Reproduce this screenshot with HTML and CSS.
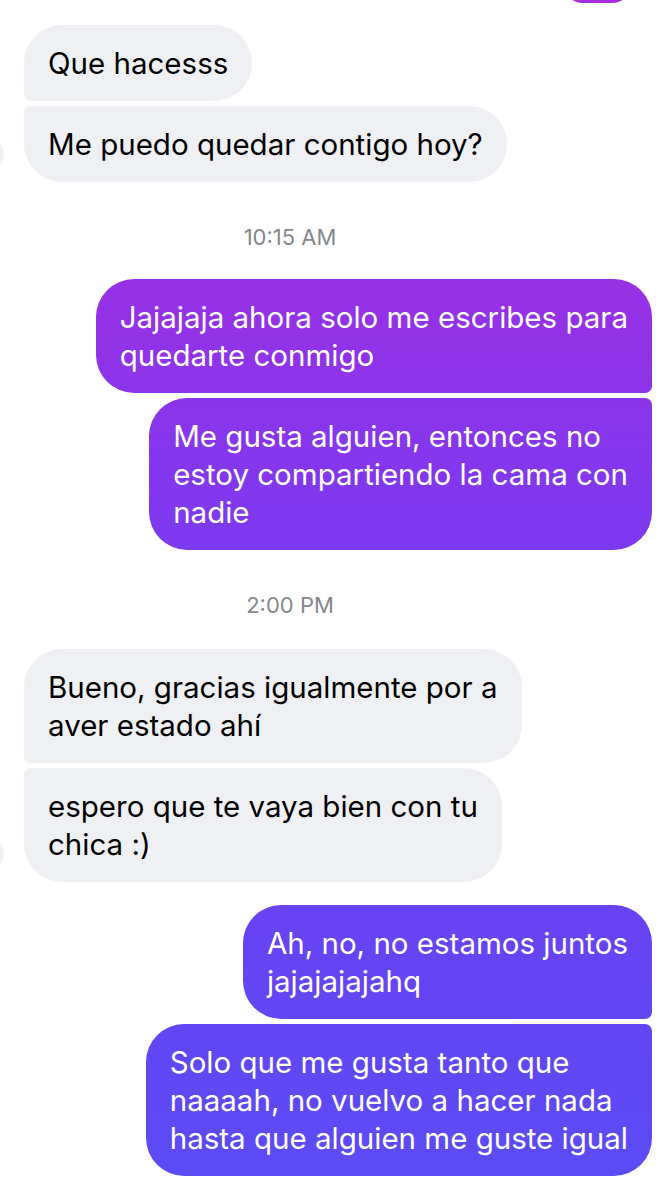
FILE: index.html
```html
<!DOCTYPE html>
<html lang="es">
<head>
    <meta charset="UTF-8">
    <meta name="viewport" content="width=device-width, initial-scale=1.0">
    <title>Chat</title>
    <link rel="stylesheet" href="styles.css">
</head>
<body>

    <div class="chat">
        <!-- burbuja cortada arriba -->
        <div class="group out cut">
            <div class="stack">
                <div class="bubble"></div>
            </div>
        </div>

        <div class="group in">
            <div class="avatar"></div>
            <div class="stack">
                <div class="bubble first">Que hacesss</div>
                <div class="bubble last">Me puedo quedar contigo hoy?</div>
            </div>
        </div>

        <div class="time">10:15 AM</div>

        <div class="group out">
            <div class="stack">
                <div class="bubble first">Jajajaja ahora solo me escribes para<br>quedarte conmigo</div>
                <div class="bubble last">Me gusta alguien, entonces no<br>estoy compartiendo la cama con<br>nadie</div>
            </div>
        </div>

        <div class="time second">2:00 PM</div>

        <div class="group in">
            <div class="avatar"></div>
            <div class="stack">
                <div class="bubble first">Bueno, gracias igualmente por a<br>aver estado ahí</div>
                <div class="bubble last">espero que te vaya bien con tu<br>chica :)</div>
            </div>
        </div>

        <div class="group out">
            <div class="stack">
                <div class="bubble first">Ah, no, no estamos juntos<br>jajajajajahq</div>
                <div class="bubble last">Solo que me gusta tanto que<br>naaaah, no vuelvo a hacer nada<br>hasta que alguien me guste igual</div>
            </div>
        </div>
    </div>

</body>
</html>
```

FILE: styles.css
```css
/* pantalla del chat */
body {
    margin: 0;
    background: #fff;
    font-family: "Inter", "Noto Sans", sans-serif;
    width: 668px;
    height: 1200px;
    overflow: hidden;
}

.chat {
    display: flex;
    flex-direction: column;
    padding: 0 16px 0 0;
}

.group {
    display: flex;
    align-items: flex-end;
}

.group.out {
    justify-content: flex-end;
    margin-top: 23px;
}

.stack {
    display: flex;
    flex-direction: column;
    gap: 5px;
}

.group.in .stack {
    align-items: flex-start;
}

.group.out .stack {
    align-items: flex-end;
}

.avatar {
    width: 32px;
    height: 32px;
    border-radius: 50%;
    background: #f1f1f1;
    margin-left: -28px;
    margin-right: 20px;
    margin-bottom: 12px;
    flex-shrink: 0;
}

.bubble {
    font-size: 29.5px;
    line-height: 38px;
    padding: 19px 24px;
    border-radius: 38px;
    white-space: nowrap;
}

.group.in .bubble {
    background: #eef0f3;
    color: #000;
}

.group.out .bubble {
    color: #fff;
    background: linear-gradient(to bottom, #a72ddd 0, #9631e6 300px, #7e39ef 520px, #6842f3 900px, #5a4cf6 1200px);
    background-attachment: fixed;
}

/* esquinas dentro de un grupo */
.group.in .bubble.first { border-bottom-left-radius: 7px; }
.group.in .bubble.last { border-top-left-radius: 7px; }
.group.out .bubble.first { border-bottom-right-radius: 7px; }
.group.out .bubble.last { border-top-right-radius: 7px; }

/* la burbuja que queda cortada arriba */
.group.out.cut {
    margin-top: -37px;
    margin-right: 20px;
}

.group.out.cut .bubble {
    width: 21px;
    height: 2px;
}

.cut + .group.in {
    margin-top: 22px;
}

.time {
    text-align: center;
    padding-right: 72px;
    font-size: 22px;
    line-height: 20px;
    color: #85878b;
    margin: 45px 0 9px;
}

.time.second {
    margin-bottom: 34px;
}
```
